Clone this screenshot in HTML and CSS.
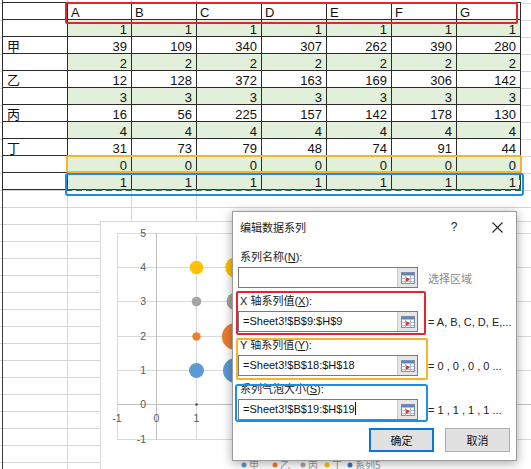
FILE: index.html
```html
<!DOCTYPE html>
<html lang="zh">
<head>
<meta charset="utf-8">
<title>编辑数据系列</title>
<link rel="stylesheet" href="styles.css">
</head>
<body>
<div class="sheet">
  <table class="grid">
    <colgroup><col class="c-label"><col class="c-narrow"><col class="c-wide"><col class="c-wide"><col class="c-wide"><col class="c-wide"><col class="c-wide"><col class="c-narrow"></colgroup>
    <tr class="hdr"><td></td><td>A</td><td>B</td><td>C</td><td>D</td><td>E</td><td>F</td><td>G</td></tr>
    <tr class="g"><td></td><td>1</td><td>1</td><td>1</td><td>1</td><td>1</td><td>1</td><td>1</td></tr>
    <tr><td>甲</td><td>39</td><td>109</td><td>340</td><td>307</td><td>262</td><td>390</td><td>280</td></tr>
    <tr class="g"><td></td><td>2</td><td>2</td><td>2</td><td>2</td><td>2</td><td>2</td><td>2</td></tr>
    <tr><td>乙</td><td>12</td><td>128</td><td>372</td><td>163</td><td>169</td><td>306</td><td>142</td></tr>
    <tr class="g"><td></td><td>3</td><td>3</td><td>3</td><td>3</td><td>3</td><td>3</td><td>3</td></tr>
    <tr><td>丙</td><td>16</td><td>56</td><td>225</td><td>157</td><td>142</td><td>178</td><td>130</td></tr>
    <tr class="g"><td></td><td>4</td><td>4</td><td>4</td><td>4</td><td>4</td><td>4</td><td>4</td></tr>
    <tr><td>丁</td><td>31</td><td>73</td><td>79</td><td>48</td><td>74</td><td>91</td><td>44</td></tr>
    <tr class="g"><td></td><td>0</td><td>0</td><td>0</td><td>0</td><td>0</td><td>0</td><td>0</td></tr>
    <tr class="g"><td></td><td>1</td><td>1</td><td>1</td><td>1</td><td>1</td><td>1</td><td>1</td></tr>
  </table>

  <div class="mark mark-red"></div>
  <div class="mark mark-orange"></div>
  <div class="ants"></div>
  <div class="mark mark-blue"></div>

  <div class="chart">
    <svg class="chart-svg" width="431" height="248" viewBox="0 0 431 248">
      <path d="M0.5 248V0.5H431" fill="none" stroke="#d9d9d9"/>
      <g stroke="#d9d9d9" stroke-width="1">
        <path d="M17 12.5H431M17 46.5H431M17 80.5H431M17 115.5H431M17 149.5H431M17 218.5H431"/>
        <path d="M17.5 12V219M96.5 12V219M135.5 12V219M175.5 12V219M214.5 12V219M254.5 12V219M293.5 12V219M333.5 12V219M372.5 12V219M412.5 12V219"/>
      </g>
      <path d="M17 183.5H431M56.5 12V219" stroke="#bfbfbf" stroke-width="1"/>
      <g class="axis-label" text-anchor="end">
        <text x="46" y="16">5</text>
        <text x="46" y="50">4</text>
        <text x="46" y="84">3</text>
        <text x="46" y="119">2</text>
        <text x="46" y="153">1</text>
        <text x="46" y="187">0</text>
        <text x="46" y="222">-1</text>
      </g>
      <g class="axis-label" text-anchor="middle">
        <text x="17" y="201">-1</text>
        <text x="56.5" y="201">0</text>
        <text x="96.5" y="201">1</text>
        <text x="135.5" y="201">2</text>
        <text x="175.5" y="201">3</text>
        <text x="214.5" y="201">4</text>
        <text x="254.5" y="201">5</text>
        <text x="293.5" y="201">6</text>
        <text x="333.5" y="201">7</text>
      </g>
      <g fill="#5b9bd5">
        <circle cx="96.5" cy="149.5" r="7.5"/>
        <circle cx="135.5" cy="149.5" r="12.5"/>
        <circle cx="175.5" cy="149.5" r="22"/>
        <circle cx="214.5" cy="149.5" r="21"/>
        <circle cx="254.5" cy="149.5" r="19.4"/>
        <circle cx="293.5" cy="149.5" r="23.7"/>
        <circle cx="333.5" cy="149.5" r="20"/>
      </g>
      <g fill="#ed7d31">
        <circle cx="96.5" cy="115.5" r="4.2"/>
        <circle cx="135.5" cy="115.5" r="13.6"/>
        <circle cx="175.5" cy="115.5" r="23"/>
        <circle cx="214.5" cy="115.5" r="15.3"/>
        <circle cx="254.5" cy="115.5" r="15.6"/>
        <circle cx="293.5" cy="115.5" r="21"/>
        <circle cx="333.5" cy="115.5" r="14.3"/>
      </g>
      <g fill="#a5a5a5">
        <circle cx="96.5" cy="80.5" r="4.8"/>
        <circle cx="135.5" cy="80.5" r="9"/>
        <circle cx="175.5" cy="80.5" r="18"/>
        <circle cx="214.5" cy="80.5" r="15"/>
        <circle cx="254.5" cy="80.5" r="14.3"/>
        <circle cx="293.5" cy="80.5" r="16"/>
        <circle cx="333.5" cy="80.5" r="13.7"/>
      </g>
      <g fill="#ffc000">
        <circle cx="96.5" cy="46.5" r="6.8"/>
        <circle cx="135.5" cy="46.5" r="10.3"/>
        <circle cx="175.5" cy="46.5" r="10.7"/>
        <circle cx="214.5" cy="46.5" r="8.3"/>
        <circle cx="254.5" cy="46.5" r="10.3"/>
        <circle cx="293.5" cy="46.5" r="11.4"/>
        <circle cx="333.5" cy="46.5" r="8"/>
      </g>
      <g fill="#4a4a4a">
        <circle cx="96.5" cy="183.5" r="1.3"/>
        <circle cx="135.5" cy="183.5" r="1.3"/>
        <circle cx="175.5" cy="183.5" r="1.3"/>
      </g>
      <g class="legend">
        <circle cx="144" cy="244" r="2.5" fill="#5b9bd5"/><text x="149" y="248">甲</text>
        <circle cx="175" cy="244" r="2.5" fill="#ed7d31"/><text x="180" y="248">乙</text>
        <circle cx="203" cy="244" r="2.5" fill="#a5a5a5"/><text x="208" y="248">丙</text>
        <circle cx="227" cy="244" r="2.5" fill="#ffc000"/><text x="232" y="248">丁</text>
        <circle cx="250" cy="244" r="2.5" fill="#4472c4"/><text x="255" y="248">系列5</text>
      </g>
    </svg>
  </div>

  <div class="dialog">
    <div class="dlg-title">
      <span class="dlg-title-text">编辑数据系列</span>
      <span class="dlg-help">?</span>
      <span class="dlg-close">
        <svg width="11" height="11" viewBox="0 0 11 11"><path d="M0.5 0.5L10.5 10.5M10.5 0.5L0.5 10.5" stroke="#262626" stroke-width="1.1"/></svg>
      </span>
    </div>
    <div class="dlg-body">
      <div class="grp">
        <div class="grp-label">系列名称(<u>N</u>):</div>
        <div class="grp-row">
          <div class="field"><span class="field-text"></span><span class="field-btn"><svg width="14" height="12" viewBox="0 0 14 12"><rect x="0.5" y="0.5" width="13" height="11" fill="#fff" stroke="#8090a8"/><rect x="1" y="1" width="12" height="2.5" fill="#5a86c4"/><path d="M1 6.5h12M1 9.5h12M4.5 3.5v8M9.5 3.5v8" stroke="#a9bdd6"/><path d="M5 5l4 2.5-4 2.5z" fill="#e0392d"/></svg></span></div>
          <span class="side side-hint">选择区域</span>
        </div>
      </div>
      <div class="grp">
        <div class="grp-label">X 轴系列值(<u>X</u>):</div>
        <div class="grp-row">
          <div class="field"><span class="field-text">=Sheet3!$B$9:$H$9</span><span class="field-btn"><svg width="14" height="12" viewBox="0 0 14 12"><rect x="0.5" y="0.5" width="13" height="11" fill="#fff" stroke="#8090a8"/><rect x="1" y="1" width="12" height="2.5" fill="#5a86c4"/><path d="M1 6.5h12M1 9.5h12M4.5 3.5v8M9.5 3.5v8" stroke="#a9bdd6"/><path d="M5 5l4 2.5-4 2.5z" fill="#e0392d"/></svg></span></div>
          <span class="side">= A, B, C, D, E,...</span>
        </div>
      </div>
      <div class="grp">
        <div class="grp-label">Y 轴系列值(<u>Y</u>):</div>
        <div class="grp-row">
          <div class="field"><span class="field-text">=Sheet3!$B$18:$H$18</span><span class="field-btn"><svg width="14" height="12" viewBox="0 0 14 12"><rect x="0.5" y="0.5" width="13" height="11" fill="#fff" stroke="#8090a8"/><rect x="1" y="1" width="12" height="2.5" fill="#5a86c4"/><path d="M1 6.5h12M1 9.5h12M4.5 3.5v8M9.5 3.5v8" stroke="#a9bdd6"/><path d="M5 5l4 2.5-4 2.5z" fill="#e0392d"/></svg></span></div>
          <span class="side">= 0 , 0 , 0 , 0 ...</span>
        </div>
      </div>
      <div class="grp">
        <div class="grp-label">系列气泡大小(<u>S</u>):</div>
        <div class="grp-row">
          <div class="field field-active"><span class="field-text">=Sheet3!$B$19:$H$19<span class="caret"></span></span><span class="field-btn"><svg width="14" height="12" viewBox="0 0 14 12"><rect x="0.5" y="0.5" width="13" height="11" fill="#fff" stroke="#8090a8"/><rect x="1" y="1" width="12" height="2.5" fill="#5a86c4"/><path d="M1 6.5h12M1 9.5h12M4.5 3.5v8M9.5 3.5v8" stroke="#a9bdd6"/><path d="M5 5l4 2.5-4 2.5z" fill="#e0392d"/></svg></span></div>
          <span class="side">= 1 , 1 , 1 , 1 ...</span>
        </div>
      </div>
      <div class="dlg-btns">
        <button class="btn btn-default">确定</button>
        <button class="btn">取消</button>
      </div>
    </div>
    <div class="mark dmark-red"></div>
    <div class="mark dmark-orange"></div>
    <div class="mark dmark-blue"></div>
  </div>
</div>
</body>
</html>
```

FILE: styles.css
```css
html, body {
  margin: 0;
  padding: 0;
}

body {
  width: 531px;
  height: 469px;
  overflow: hidden;
  background: #fff;
  font-family: "Liberation Sans", "Noto Sans CJK SC", sans-serif;
}

.sheet {
  position: relative;
  width: 531px;
  height: 469px;
  overflow: hidden;
  background-color: #fff;
  background-image:
    linear-gradient(to right, transparent 2px, #3a3a3a 2px, #3a3a3a 3px, transparent 3px),
    linear-gradient(to right,
      transparent 67px, #d6d6d6 67px, #d6d6d6 68px,
      transparent 68px, transparent 131px, #d6d6d6 131px, #d6d6d6 132px,
      transparent 132px, transparent 196px, #d6d6d6 196px, #d6d6d6 197px,
      transparent 197px),
    repeating-linear-gradient(to bottom,
      transparent 0, transparent 3px, #d6d6d6 3px, #d6d6d6 4px, transparent 4px, transparent 17px);
}

/* ---------- spreadsheet ---------- */
.grid {
  border-collapse: collapse;
  table-layout: fixed;
  width: 519px;
  margin: 2px 0 0 2px;
  font-size: 13px;
  color: #111;
  background: #fff;
}

.c-label { width: 65px; }
.c-narrow { width: 64px; }
.c-wide { width: 65px; }

.grid td {
  border: 1px solid #2b2b2b;
  height: 16px;
  padding: 0 4px 0 3px;
  line-height: 12px;
  vertical-align: bottom;
  text-align: right;
  white-space: nowrap;
  overflow: hidden;
}

.grid td:first-child {
  text-align: left;
  padding-left: 4px;
}

.grid .hdr td {
  text-align: left;
  padding-left: 3px;
}

.grid .g td {
  background: #e2efda;
}

.grid .g td:first-child {
  background: #fff;
}

/* ---------- annotation frames ---------- */
.mark {
  position: absolute;
  box-sizing: border-box;
  border: 2px solid;
  border-radius: 2px;
  pointer-events: none;
}

.mark-red {
  left: 65px;
  top: 2px;
  width: 453px;
  height: 22px;
  border-color: #e3262d;
}

.mark-orange {
  left: 66px;
  top: 155px;
  width: 456px;
  height: 18px;
  border-color: #f6b42a;
}

.mark-blue {
  left: 65px;
  top: 173px;
  width: 459px;
  height: 23px;
  border-color: #1a8fe3;
  border-radius: 3px;
}

.ants {
  position: absolute;
  box-sizing: border-box;
  left: 66px;
  top: 174px;
  width: 455px;
  height: 17px;
  border: 2px dashed #24683f;
  border-top: none;
}

/* ---------- chart ---------- */
.chart {
  position: absolute;
  left: 100px;
  top: 221px;
  width: 431px;
  height: 248px;
  background: #fff;
}

.chart-svg {
  display: block;
}

.axis-label text {
  font-family: "Liberation Sans", sans-serif;
  font-size: 10.5px;
  fill: #595959;
}

.legend text {
  font-family: "Noto Sans CJK SC", sans-serif;
  font-size: 10px;
  fill: #9a9a9a;
}

/* ---------- dialog ---------- */
.dialog {
  position: absolute;
  left: 232px;
  top: 211px;
  width: 283px;
  border: 1px solid #9a9a9a;
  background: #fff;
  box-shadow: 0 2px 10px rgba(0, 0, 0, 0.35);
  font-size: 11px;
  color: #1a1a1a;
}

.dlg-title {
  display: flex;
  align-items: center;
  height: 30px;
  padding: 0 9px 0 7px;
}

.dlg-title-text {
  flex: 1;
}

.dlg-help {
  width: 20px;
  text-align: center;
  font-size: 12px;
  margin-right: 23px;
}

.dlg-close {
  width: 20px;
  display: flex;
  justify-content: center;
}

.dlg-body {
  padding: 5px 0 8px 5px;
}

.grp + .grp {
  margin-top: 3px;
}

.grp-label {
  height: 20px;
  line-height: 20px;
  padding-left: 2px;
}

.grp-label u {
  text-decoration: underline;
}

.grp-row {
  display: flex;
  align-items: center;
  gap: 10px;
  height: 21px;
}

.field {
  box-sizing: border-box;
  display: flex;
  width: 180px;
  height: 21px;
  border: 1px solid #7a7a7a;
  background: #fff;
}

.field-text {
  flex: 1;
  padding-left: 4px;
  line-height: 19px;
  white-space: nowrap;
  color: #111;
}

.caret {
  display: inline-block;
  width: 1px;
  height: 13px;
  background: #111;
  vertical-align: -2px;
}

.field-btn {
  width: 19px;
  display: flex;
  align-items: center;
  justify-content: center;
  background: #e6e6e6;
  border-left: 1px solid #c8c8c8;
}

.side {
  white-space: nowrap;
  color: #222;
}

.side-hint {
  color: #8a8a8a;
}

.dlg-btns {
  display: flex;
  justify-content: flex-end;
  gap: 11px;
  margin-top: 8px;
  padding-right: 6px;
}

.btn {
  box-sizing: border-box;
  width: 65px;
  height: 24px;
  margin: 0;
  padding: 0;
  border: 1px solid #adadad;
  background: #e1e1e1;
  font-family: "Liberation Sans", "Noto Sans CJK SC", sans-serif;
  font-size: 11px;
  color: #111;
}

.btn-default {
  border: 2px solid #0a78d6;
}

.dmark-red {
  left: 3px;
  top: 79px;
  width: 190px;
  height: 44px;
  border-color: #e3262d;
}

.dmark-orange {
  left: 3px;
  top: 126px;
  width: 192px;
  height: 42px;
  border-color: #f6b42a;
}

.dmark-blue {
  left: 2px;
  top: 172px;
  width: 193px;
  height: 38px;
  border-color: #1a8fe3;
  border-radius: 3px;
}
```
